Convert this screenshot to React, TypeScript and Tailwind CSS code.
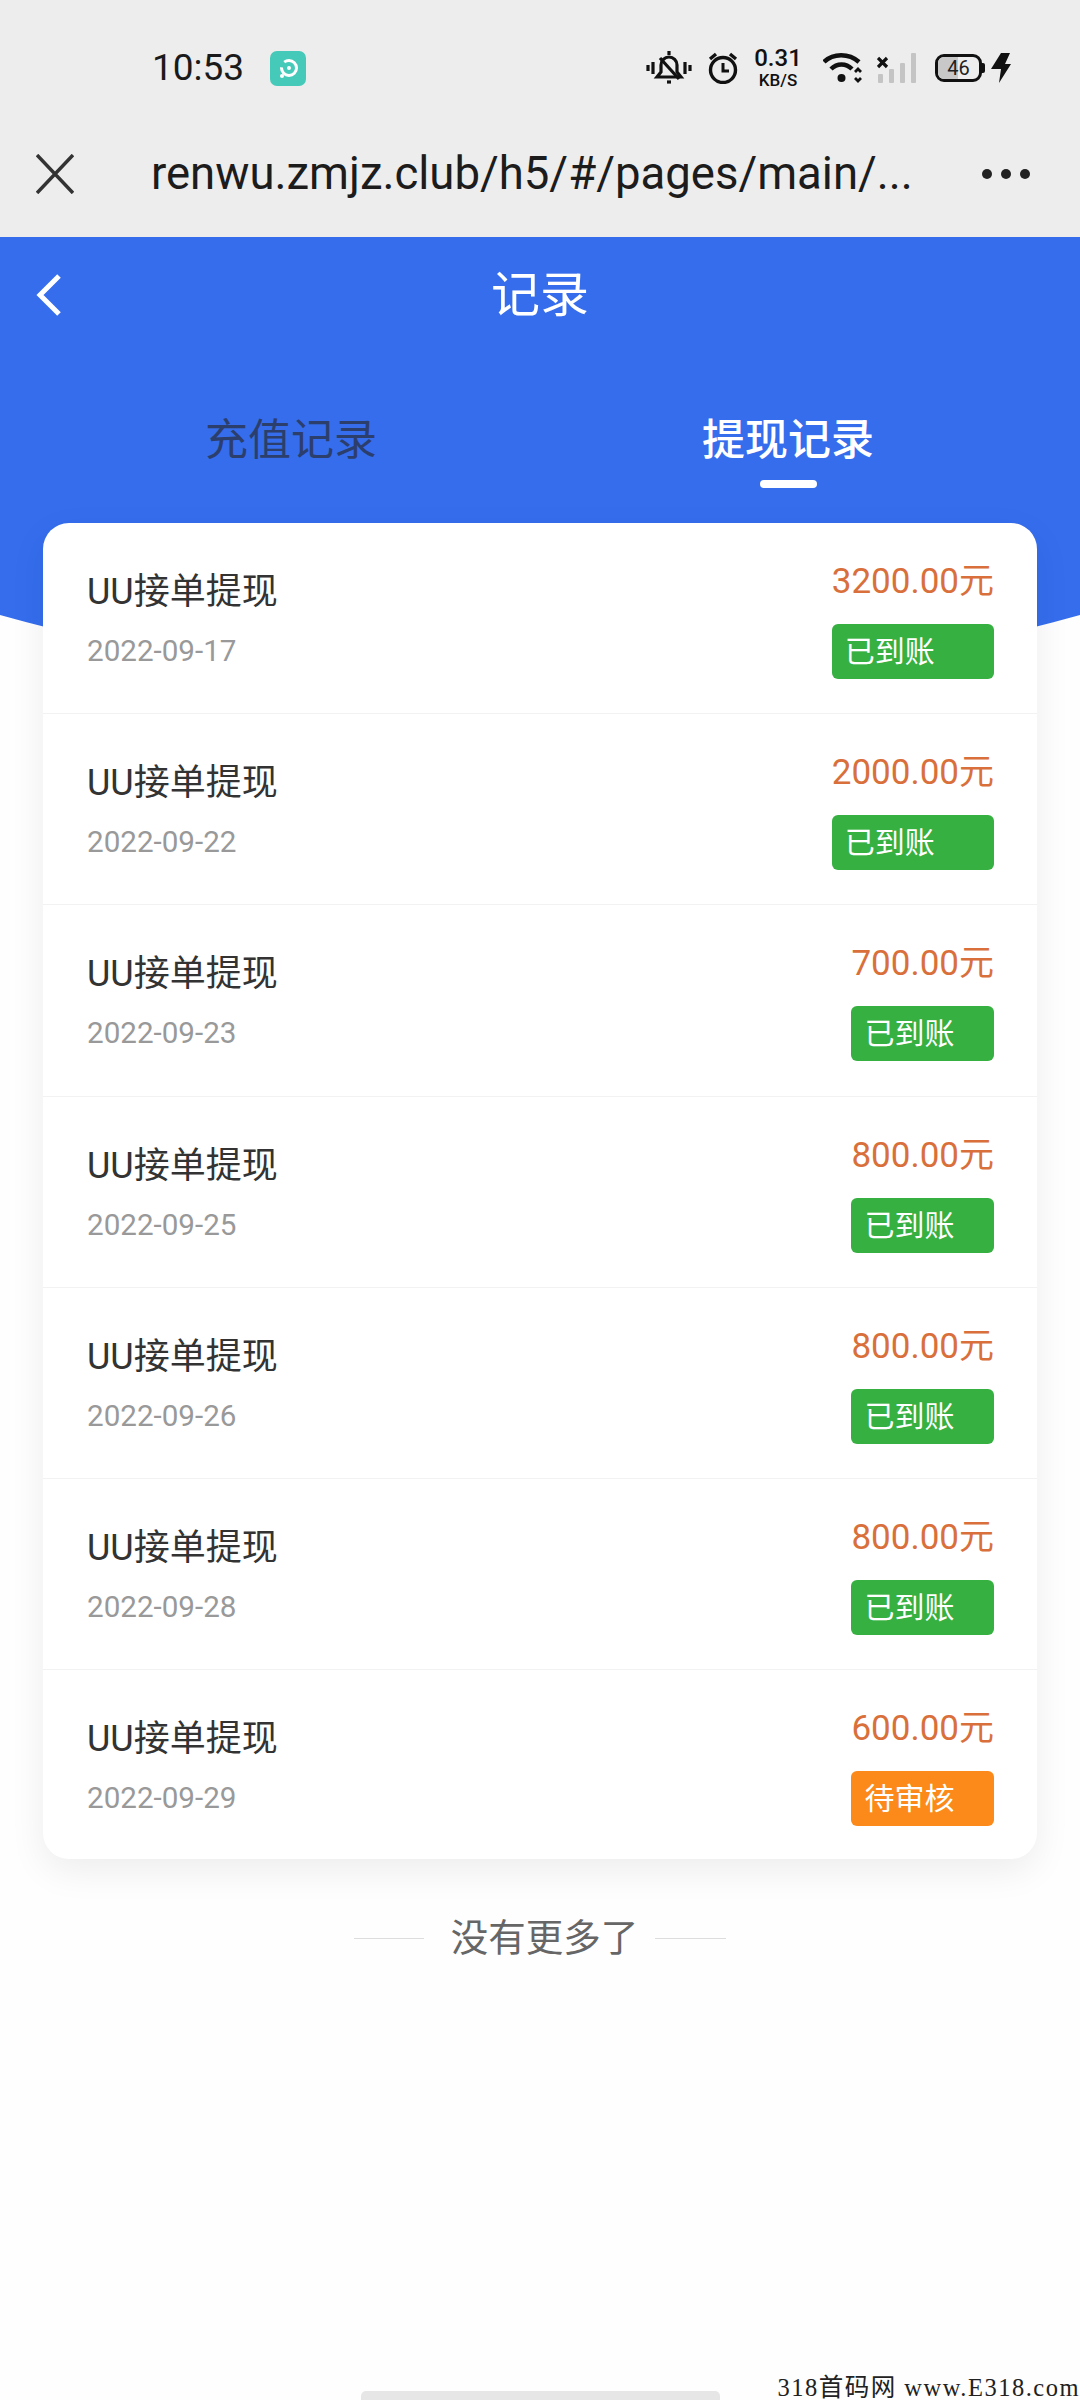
const rows = [
  { date: "2022-09-17", amount: "3200.00元", status: "已到账" },
  { date: "2022-09-22", amount: "2000.00元", status: "已到账" },
  { date: "2022-09-23", amount: "700.00元", status: "已到账" },
  { date: "2022-09-25", amount: "800.00元", status: "已到账" },
  { date: "2022-09-26", amount: "800.00元", status: "已到账" },
  { date: "2022-09-28", amount: "800.00元", status: "已到账" },
  { date: "2022-09-29", amount: "600.00元", status: "待审核" },
];

function StatusIcons() {
  return (
    <div className="flex items-center">
      {/* muted bell */}
      <svg width="46" height="34" viewBox="0 0 46 34" fill="none" stroke="#111" strokeWidth="3.200">
        <path d="M2 14v6M7 11v12M39 11v12M44 14v6" />
        <path d="M23 0v4M11 26h24l-4-5v-7a8 8 0 0 0-16 0v7z" />
        <path d="M14 7l19 21" />
        <path d="M21 31h4" />
      </svg>
      {/* alarm */}
      <svg width="30" height="32" viewBox="0 0 30 32" fill="none" stroke="#111" strokeWidth="3.400" className="ml-[16px]">
        <circle cx="15" cy="18" r="12.500" />
        <path d="M15 11v8h6" strokeWidth="3" />
        <path d="M2 7l6-5M28 7l-6-5" strokeWidth="3.400" />
      </svg>
      <div className="ml-[16px] flex w-[48px] flex-col items-center font-['Roboto',sans-serif] font-medium text-[#111]">
        <span className="text-[24px] leading-[20px]">0.31</span>
        <span className="mt-[4px] text-[17px] leading-[16px]">KB/S</span>
      </div>
      {/* wifi */}
      <svg width="40" height="32" viewBox="0 0 40 32" fill="none" stroke="#111" strokeWidth="4.500" className="ml-[21px]">
        <path d="M1 10C10 1 26 1 36 10" />
        <path d="M8 17c6-6 15-6 21 0" />
        <circle cx="18.500" cy="26" r="4" fill="#111" stroke="none" />
        <path d="M32 20l3-3 3 3M32 26l3 3 3-3" strokeWidth="2.800" />
      </svg>
      {/* signal */}
      <svg width="40" height="32" viewBox="0 0 40 32" className="ml-[14px]">
        <path d="M1 6l9 9M10 6l-9 9" stroke="#111" strokeWidth="3.200" />
        <rect x="1" y="22" width="5" height="9" rx="1" fill="#c4c4c4" />
        <rect x="12" y="17" width="5" height="14" rx="1" fill="#c4c4c4" />
        <rect x="23" y="11" width="5" height="20" rx="1" fill="#c4c4c4" />
        <rect x="34" y="1" width="5" height="30" rx="1" fill="#c4c4c4" />
      </svg>
      {/* battery */}
      <div className="relative ml-[18px] flex h-[28px] w-[47px] items-center justify-center overflow-hidden rounded-[9px] border-[3px] border-[#111]">
        <div className="absolute inset-y-0 left-0 w-[20px] bg-[#c8c8c8]" />
        <span className="relative font-['Roboto',sans-serif] text-[20px] leading-none text-[#222]">46</span>
      </div>
      <div className="h-[10px] w-[3px] rounded-r-[2px] bg-[#111]" />
      <svg width="20" height="30" viewBox="0 0 20 30" className="ml-[6px]">
        <path d="M10 0h9l-5 11h6L8 30l2-14H0z" fill="#111" />
      </svg>
    </div>
  );
}

export default function App() {
  return (
    <div className="relative h-[2400px] w-[1080px] overflow-hidden bg-[#fefefe] font-['Roboto','Noto_Sans_CJK_SC',sans-serif]">
      <div className="h-[237px] bg-[#ededed]">
        <div className="flex h-[136px] items-start pr-[69px] pl-[152px] pt-[46px]">
          <span className="text-[37px] leading-[44px] text-[#1a1a1a]">10:53</span>
          <div className="mt-[5px] ml-[26px] flex h-[35px] w-[36px] items-center justify-center rounded-[7px] bg-[#45c9b8]">
            <svg width="22" height="22" viewBox="0 0 22 22">
              <circle cx="12" cy="10" r="7.500" fill="none" stroke="#ffffff" strokeWidth="3" strokeDasharray="24 6" />
              <circle cx="12" cy="10" r="2" fill="#ffffff" />
              <circle cx="5" cy="18" r="2" fill="#ffffff" />
            </svg>
          </div>
          <div className="mt-[2px] ml-auto">
            <StatusIcons />
          </div>
        </div>
        <div className="flex h-[76px] items-center pr-[50px] pl-[36px]">
          <svg width="38" height="40" viewBox="0 0 38 40" fill="none" stroke="#333" strokeWidth="3.500">
            <path d="M1 1l36 38M37 1L1 39" />
          </svg>
          <span className="ml-[77px] text-[45.500px] leading-[76px] whitespace-nowrap text-[#1c1c1c]">renwu.zmjz.club/h5/#/pages/main/...</span>
          <div className="ml-auto flex shrink-0 gap-[9px]">
            <span className="size-[10px] rounded-full bg-[#222]" />
            <span className="size-[10px] rounded-full bg-[#222]" />
            <span className="size-[10px] rounded-full bg-[#222]" />
          </div>
        </div>
      </div>

      <div className="relative h-[452px] overflow-hidden">
        <div className="absolute bottom-0 left-1/2 h-[4016px] w-[4016px] -translate-x-1/2 rounded-full bg-[#356ded]" />
        <div className="relative flex h-[116px] items-center justify-center">
          <svg width="26" height="42" viewBox="0 0 26 42" fill="none" stroke="#ffffff" strokeWidth="5" className="absolute top-[37px] left-[36px]">
            <path d="M23 2L4 21l19 19" />
          </svg>
          <span className="pt-[2px] text-[49px] leading-[116px] text-white">记录</span>
        </div>
        <div className="relative mt-[47px] flex">
          <div className="flex w-[582px] justify-center">
            <span className="text-[43px] leading-[80px] text-[#2c3e6b]">充值记录</span>
          </div>
          <div className="flex w-[412px] flex-col items-center">
            <span className="text-[43px] leading-[80px] font-medium text-white">提现记录</span>
            <div className="h-[8px] w-[57px] rounded-[4px] bg-white" />
          </div>
        </div>
      </div>

      <div className="relative z-10 mx-[43px] -mt-[166px] rounded-[26px] bg-white shadow-[0_12px_36px_rgba(0,0,0,0.07)]">
        {rows.map((row, i) => (
          <div
            key={row.date}
            className={
              i < rows.length - 1
                ? "flex h-[191.200px] justify-between border-b border-[#f2f2f2] pr-[43px] pl-[44px]"
                : "flex h-[189px] justify-between pr-[43px] pl-[44px]"
            }
          >
            <div className="flex flex-col pt-[49px]">
              <span className="text-[36px] leading-[40px] text-[#333333]">UU接单提现</span>
              <span className="mt-[19px] text-[29.600px] leading-[40px] text-[#999999]">{row.date}</span>
            </div>
            <div className="flex flex-col pt-[39px]">
              <span className="text-[35px] leading-[40px] text-[#d9703c]">{row.amount}</span>
              <span
                className={
                  row.status === "已到账"
                    ? "mt-[22px] h-[55px] rounded-[6px] bg-[#36b041] pl-[13px] text-[30px] leading-[55px] text-white"
                    : "mt-[22px] h-[55px] rounded-[6px] bg-[#fb8a1a] pl-[13px] text-[30px] leading-[55px] text-white"
                }
              >
                {row.status}
              </span>
            </div>
          </div>
        ))}
      </div>

      <div className="mt-[56px] flex items-center justify-center">
        <div className="h-[1px] w-[70px] bg-[#dddddd]" />
        <span className="mr-[17px] ml-[27px] text-[37.500px] leading-[46px] text-[#666666]">没有更多了</span>
        <div className="h-[1px] w-[71px] bg-[#dddddd]" />
      </div>

      <div className="absolute bottom-0 left-[361px] h-[9px] w-[359px] rounded-t-[5px] bg-[#e6e6e6]" />
      <span className="absolute right-0 bottom-[-2px] font-['Liberation_Serif','Noto_Sans_CJK_SC',serif] text-[24.500px] leading-[28px] tracking-[1.500px] whitespace-pre text-[#222]">318首码网 www.E318.com</span>
    </div>
  );
}
